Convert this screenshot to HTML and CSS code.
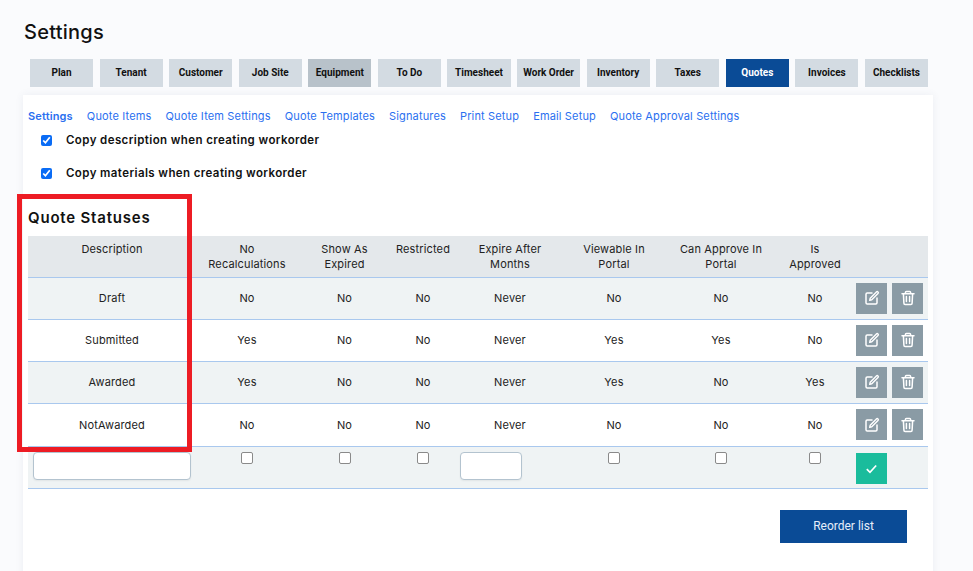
FILE: index.html
```html
<!DOCTYPE html>
<html lang="en">
<head>
<meta charset="utf-8">
<title>Settings</title>
<link rel="stylesheet" href="styles.css">
</head>
<body>
<svg class="sprite" width="0" height="0" aria-hidden="true">
  <symbol id="edit" viewBox="0 0 16 16">
    <path d="M8 3H3.2C2.5 3 2 3.5 2 4.2v8.6c0 .7.5 1.2 1.2 1.2h8.6c.7 0 1.2-.5 1.2-1.2V8" fill="none" stroke="currentColor" stroke-width="1.5" stroke-linecap="round"/>
    <path d="M6.2 8.2 12.4 2c.5-.5 1.1-.5 1.6 0s.5 1.1 0 1.6L7.8 9.8l-2.1.5z" fill="none" stroke="currentColor" stroke-width="1.4" stroke-linejoin="round"/>
  </symbol>
  <symbol id="trash" viewBox="0 0 16 16">
    <path d="M2 3.7h12M5.4 3.5V2.6c0-.6.4-1 1-1h3.2c.6 0 1 .4 1 1v.9M3.4 3.9l.5 9.4c0 .7.5 1.2 1.2 1.2h5.8c.7 0 1.2-.5 1.2-1.2l.5-9.4" fill="none" stroke="currentColor" stroke-width="1.5" stroke-linecap="round"/>
    <path d="M6.4 6.6v5M9.6 6.6v5" fill="none" stroke="currentColor" stroke-width="1.5" stroke-linecap="round"/>
  </symbol>
</svg>
<main class="page">
  <h1 class="title">Settings</h1>
  <nav class="tabs">
    <a class="tab">Plan</a>
    <a class="tab">Tenant</a>
    <a class="tab">Customer</a>
    <a class="tab">Job Site</a>
    <a class="tab tab-hover">Equipment</a>
    <a class="tab">To Do</a>
    <a class="tab">Timesheet</a>
    <a class="tab">Work Order</a>
    <a class="tab">Inventory</a>
    <a class="tab">Taxes</a>
    <a class="tab tab-active">Quotes</a>
    <a class="tab">Invoices</a>
    <a class="tab">Checklists</a>
  </nav>
  <section class="card">
    <nav class="subnav">
      <a class="sublink sublink-active">Settings</a>
      <a class="sublink">Quote Items</a>
      <a class="sublink">Quote Item Settings</a>
      <a class="sublink">Quote Templates</a>
      <a class="sublink">Signatures</a>
      <a class="sublink">Print Setup</a>
      <a class="sublink">Email Setup</a>
      <a class="sublink">Quote Approval Settings</a>
    </nav>
    <label class="check-row"><input type="checkbox" checked>Copy description when creating workorder</label>
    <label class="check-row"><input type="checkbox" checked>Copy materials when creating workorder</label>
    <h2 class="section-title">Quote Statuses</h2>
    <table class="status-table">
      <colgroup>
        <col class="c1"><col class="c2"><col class="c3"><col class="c4"><col class="c5"><col class="c6"><col class="c7"><col class="c8"><col class="c9">
      </colgroup>
      <thead>
        <tr>
          <th>Description</th><th>No<br>Recalculations</th><th>Show As<br>Expired</th><th>Restricted</th><th>Expire After<br>Months</th><th>Viewable In<br>Portal</th><th>Can Approve In<br>Portal</th><th>Is<br>Approved</th><th></th>
        </tr>
      </thead>
      <tbody>
        <tr class="shade">
          <td>Draft</td><td>No</td><td>No</td><td>No</td><td>Never</td><td>No</td><td>No</td><td>No</td>
          <td class="actions"><button class="icon-btn"><svg class="ico"><use href="#edit"/></svg></button><button class="icon-btn"><svg class="ico"><use href="#trash"/></svg></button></td>
        </tr>
        <tr>
          <td>Submitted</td><td>Yes</td><td>No</td><td>No</td><td>Never</td><td>Yes</td><td>Yes</td><td>No</td>
          <td class="actions"><button class="icon-btn"><svg class="ico"><use href="#edit"/></svg></button><button class="icon-btn"><svg class="ico"><use href="#trash"/></svg></button></td>
        </tr>
        <tr class="shade">
          <td>Awarded</td><td>Yes</td><td>No</td><td>No</td><td>Never</td><td>Yes</td><td>No</td><td>Yes</td>
          <td class="actions"><button class="icon-btn"><svg class="ico"><use href="#edit"/></svg></button><button class="icon-btn"><svg class="ico"><use href="#trash"/></svg></button></td>
        </tr>
        <tr class="tall">
          <td>NotAwarded</td><td>No</td><td>No</td><td>No</td><td>Never</td><td>No</td><td>No</td><td>No</td>
          <td class="actions"><button class="icon-btn"><svg class="ico"><use href="#edit"/></svg></button><button class="icon-btn"><svg class="ico"><use href="#trash"/></svg></button></td>
        </tr>
        <tr class="shade new-row">
          <td class="cell-left"><input class="text-input input-wide" type="text"></td>
          <td><input class="box" type="checkbox"></td>
          <td><input class="box" type="checkbox"></td>
          <td><input class="box" type="checkbox"></td>
          <td class="cell-left"><input class="text-input input-small" type="text"></td>
          <td><input class="box" type="checkbox"></td>
          <td><input class="box" type="checkbox"></td>
          <td><input class="box" type="checkbox"></td>
          <td class="actions"><button class="icon-btn btn-ok"><svg class="ico-ok" viewBox="0 0 16 16"><path d="M3 8.6 6.4 12 13 4.8" fill="none" stroke="currentColor" stroke-width="1.8"/></svg></button></td>
        </tr>
      </tbody>
    </table>
    <div class="footer-row"><button class="reorder">Reorder list</button></div>
    <div class="highlight"></div>
  </section>
</main>
</body>
</html>
```

FILE: styles.css
```css
* { box-sizing: border-box; }
html, body { margin: 0; height: 571px; overflow: hidden; }
body { background: #fafbfd; color: #111; font-family: "Inter", "Open Sans", sans-serif; }
.sprite { position: absolute; }
.page { padding: 19px 40px 0 23px; }
.title { margin: 0 0 0 1px; font-size: 20px; line-height: 26px; font-weight: 500; letter-spacing: .25px; color: #111; }
.tabs { display: flex; gap: 6.5px; margin: 14px 5px 8px 7px; }
.tab { flex: 1 1 0; height: 28px; padding-bottom: 1px; background: #d3dbe2; display: flex; align-items: center; justify-content: center; font-family: "Roboto", sans-serif; font-size: 10px; font-weight: 700; color: #111; white-space: nowrap; }
.tab-hover { background: #b8c2ca; }
.tab-active { background: #0a4b96; color: #fff; }
.card { position: relative; background: #fff; height: 500px; padding: 13px 5px 0; box-shadow: 0 0 8px rgba(60, 80, 110, .08); }
.subnav { display: flex; gap: 14px; height: 15px; align-items: center; font-size: 11px; letter-spacing: .15px; }
.sublink { color: #2a6ff0; white-space: nowrap; }
.sublink-active { font-weight: 600; }
.check-row { display: flex; align-items: center; height: 16px; margin: 9px 0 17px 13px; font-size: 11.5px; font-weight: 600; letter-spacing: .4px; color: #111; }
.check-row + .check-row { margin-top: 0; }
.check-row input { width: 11px; height: 11px; margin: 0 14px 0 0; accent-color: #0a6cf5; }
.section-title { margin: 28px 0 9px; font-size: 15px; line-height: 18px; font-weight: 600; letter-spacing: .8px; color: #111; }
.status-table { width: 900px; table-layout: fixed; border-collapse: collapse; font-size: 11px; letter-spacing: .15px; color: #222; }
.c1 { width: 168px; } .c2 { width: 102px; } .c3 { width: 93px; } .c4 { width: 64px; } .c5 { width: 110px; } .c6 { width: 98px; } .c7 { width: 116px; } .c8 { width: 72px; } .c9 { width: 77px; }
.status-table th { height: 41px; padding: 6px 0 0; background: #e4e8eb; font-weight: 400; line-height: 15px; vertical-align: top; text-align: center; border-bottom: 1px solid #a9c8ee; }
.status-table td { height: 42px; padding: 0; text-align: center; vertical-align: middle; border-bottom: 1px solid #a9c8ee; }
.status-table .tall td { height: 43px; }
.shade td { background: #eff3f4; }
.actions { white-space: nowrap; text-align: left !important; padding-left: 5px !important; }
.icon-btn { display: inline-flex; width: 31px; height: 31px; padding: 0; margin: 0 5px 0 0; border: 0; background: #8a9ba5; color: #fff; align-items: center; justify-content: center; vertical-align: middle; }
.ico { width: 16px; height: 16px; }
.btn-ok { background: #1abc9c; }
.ico-ok { width: 15px; height: 15px; }
.status-table .new-row td { vertical-align: top; padding-top: 5px; }
.status-table .new-row .actions { padding-top: 6px; }
.cell-left { text-align: left !important; padding-left: 5px !important; }
.box { width: 12px; height: 12px; margin: 0; appearance: none; background: #fff; border: 1px solid #8a8a8a; border-radius: 2px; display: inline-block; vertical-align: top; }
.text-input { display: block; height: 28px; border: 1px solid #b3c3cf; border-radius: 4px; background: #fff; box-shadow: 0 1px 2px rgba(0,0,0,.06); }
.input-wide { width: 158px; }
.input-small { width: 62px; }
.footer-row { display: flex; justify-content: flex-end; padding: 21px 21px 0 0; }
.reorder { width: 127px; height: 33px; border: 0; background: #0a4b96; color: #e6eefa; font-family: "Roboto", sans-serif; font-size: 12px; font-weight: 400; }
.highlight { position: absolute; left: -6px; top: 99px; width: 175px; height: 258px; border: 5px solid #ed1c24; pointer-events: none; }
```
